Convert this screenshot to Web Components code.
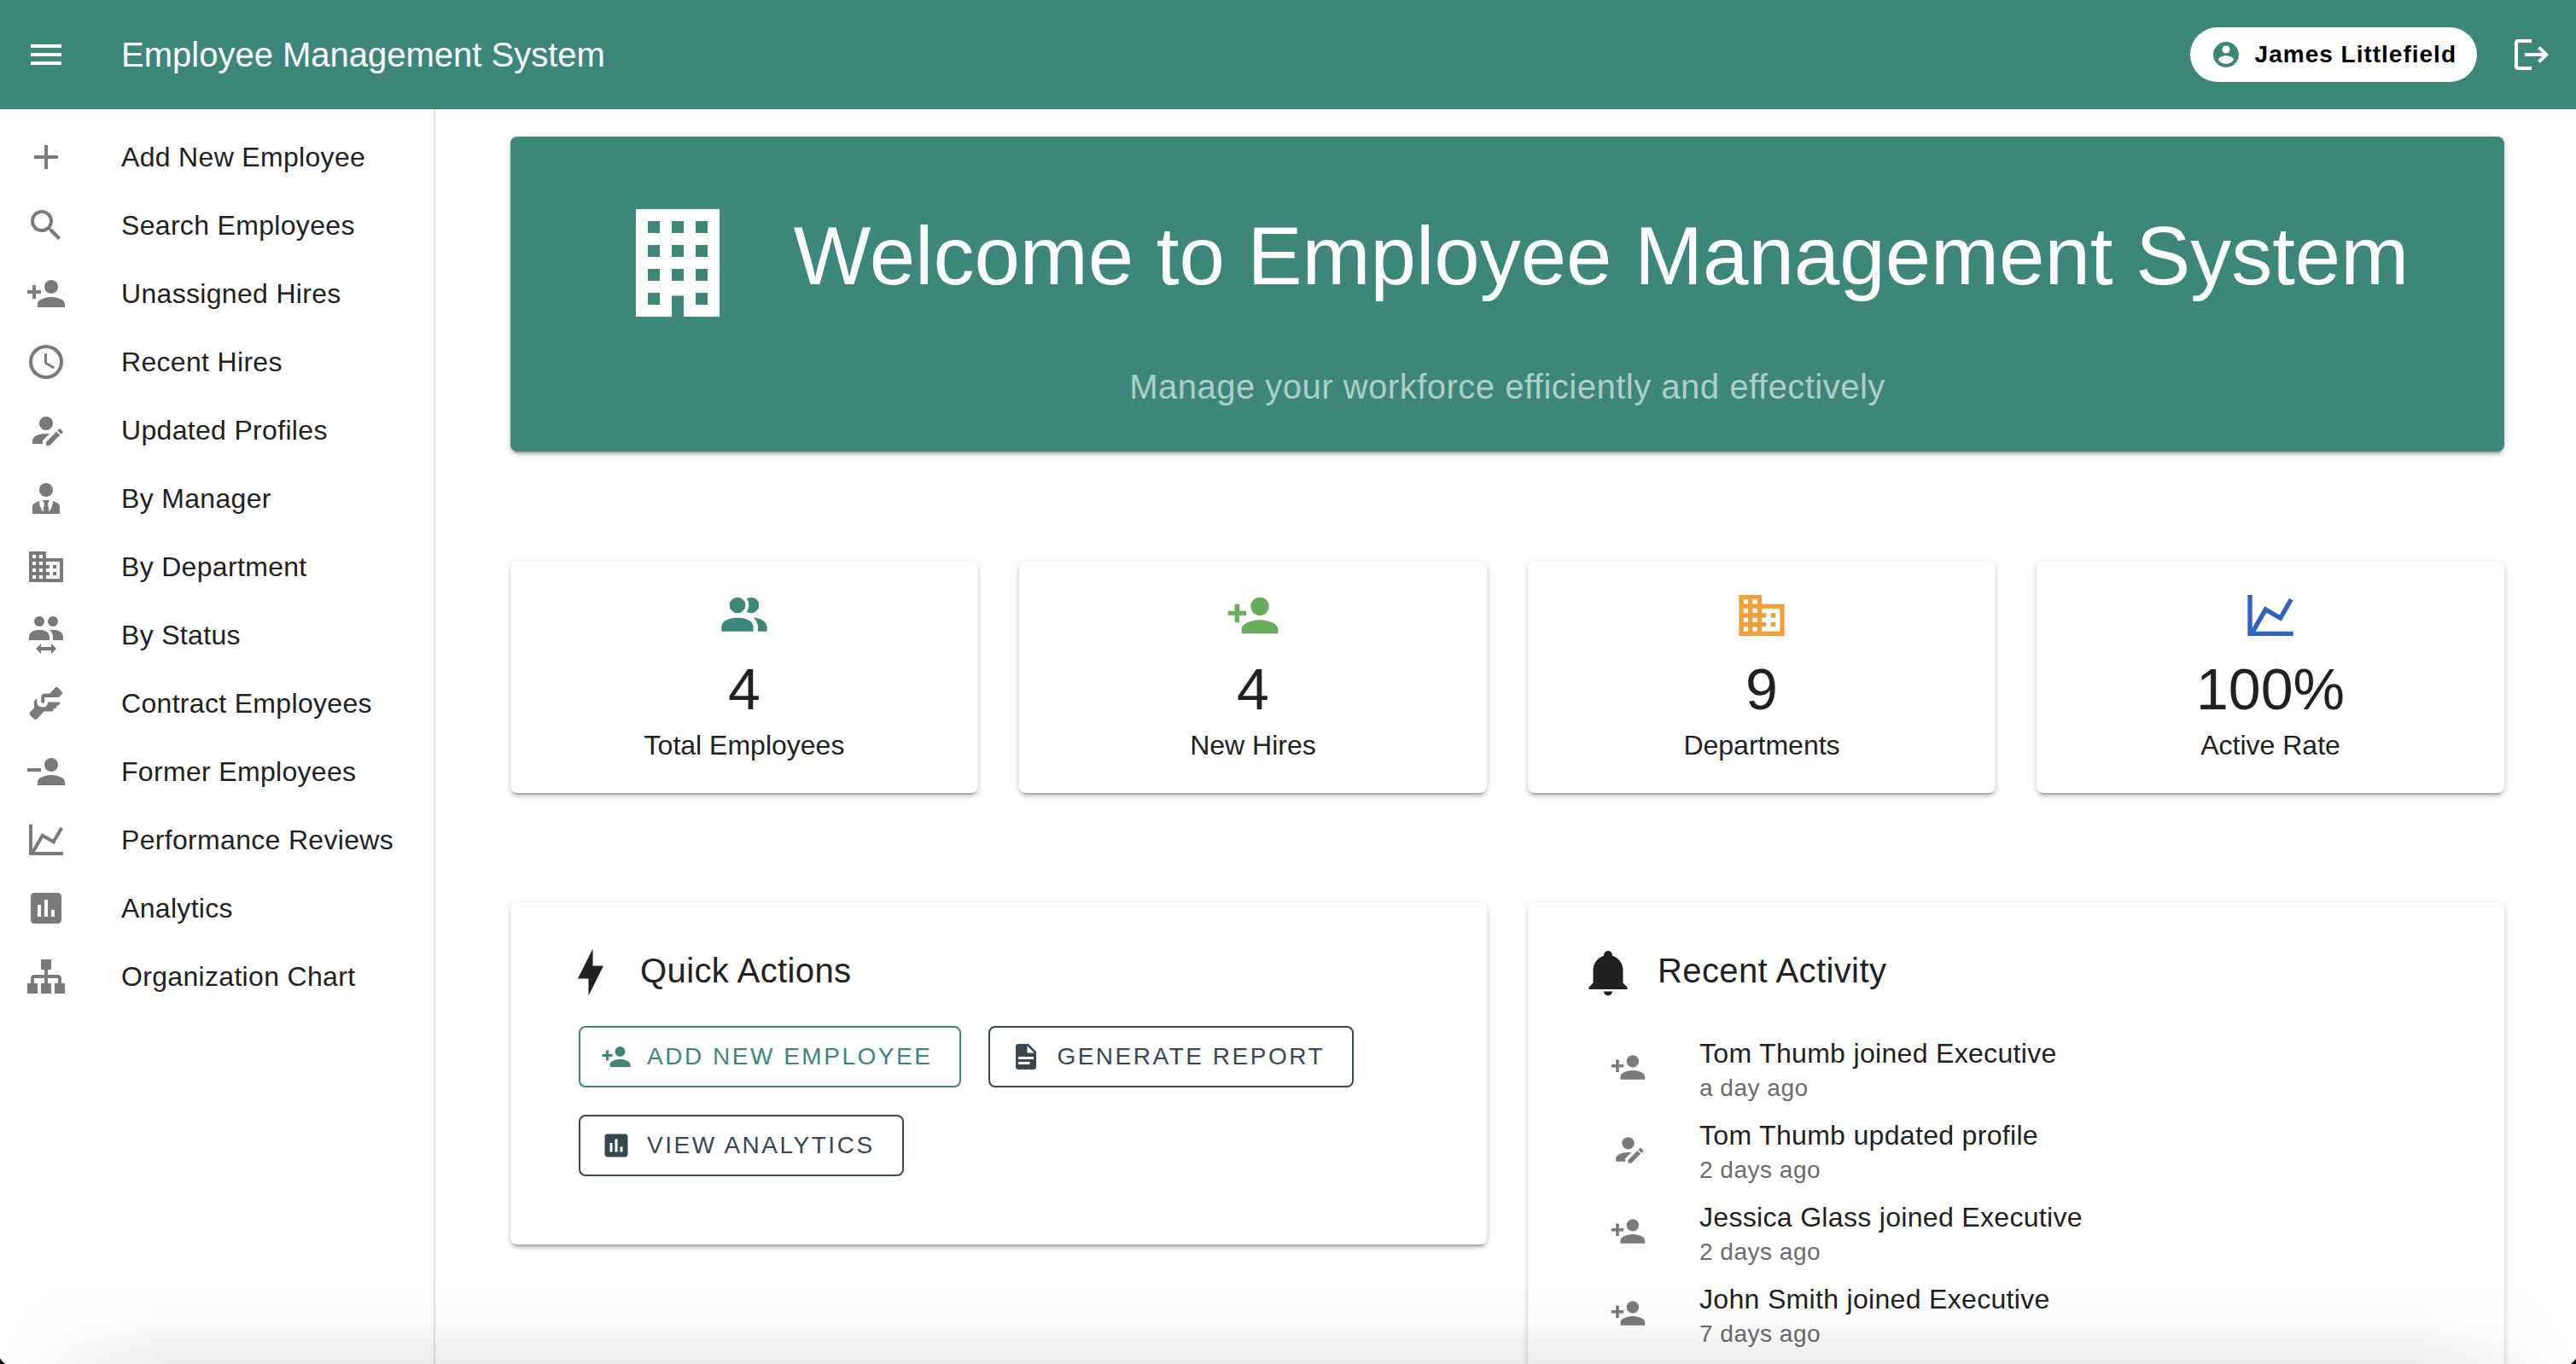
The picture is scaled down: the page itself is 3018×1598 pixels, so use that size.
<!DOCTYPE html>
<html lang="en">
<head>
<meta charset="utf-8">
<title>Employee Management System</title>
<style>
  :root {
    --primary: #3c877a;
    --ink: #212121;
    --muted: #7a7a7a;
    --secondary: #37474f;
    --elevation: 0 6px 2px -4px rgba(0,0,0,.2), 0 4px 4px 0 rgba(0,0,0,.14), 0 2px 10px 0 rgba(0,0,0,.12);
  }
  html, body { height: 100%; }
  body {
    margin: 0;
    overflow: hidden;
    background: #fff;
    color: var(--ink);
    font-family: "Liberation Sans", Arial, sans-serif;
    font-size: 32px;
    line-height: 48px;
  }
</style>
</head>
<body>
<ems-app></ems-app>
<script>
const ICONS = {
  menu: 'M3,6H21V8H3V6M3,11H21V13H3V11M3,16H21V18H3V16Z',
  plus: 'M19,13H13V19H11V13H5V11H11V5H13V11H19V13Z',
  magnify: 'M9.5,3A6.5,6.5 0 0,1 16,9.5C16,11.11 15.41,12.59 14.44,13.73L14.71,14H15.5L20.5,19L19,20.5L14,15.5V14.71L13.73,14.44C12.59,15.41 11.11,16 9.5,16A6.5,6.5 0 0,1 3,9.5A6.5,6.5 0 0,1 9.5,3M9.5,5C7,5 5,7 5,9.5C5,12 7,14 9.5,14C12,14 14,12 14,9.5C14,7 12,5 9.5,5Z',
  'account-plus': 'M15,14C12.33,14 7,15.33 7,18V20H23V18C23,15.33 17.67,14 15,14M6,10V7H4V10H1V12H4V15H6V12H9V10M15,12A4,4 0 0,0 19,8A4,4 0 0,0 15,4A4,4 0 0,0 11,8A4,4 0 0,0 15,12Z',
  'account-minus': 'M15,14C12.33,14 7,15.33 7,18V20H23V18C23,15.33 17.67,14 15,14M1,10V12H9V10M15,12A4,4 0 0,0 19,8A4,4 0 0,0 15,4A4,4 0 0,0 11,8A4,4 0 0,0 15,12Z',
  clock: 'M12,20A8,8 0 0,0 20,12A8,8 0 0,0 12,4A8,8 0 0,0 4,12A8,8 0 0,0 12,20M12,2A10,10 0 0,1 22,12A10,10 0 0,1 12,22C6.47,22 2,17.5 2,12A10,10 0 0,1 12,2M12.5,7V12.25L17,14.92L16.25,16.15L11,13V7H12.5Z',
  'account-edit': 'M21.7,13.35L20.7,14.35L18.65,12.3L19.65,11.3C19.86,11.09 20.21,11.09 20.42,11.3L21.7,12.58C21.91,12.79 21.91,13.14 21.7,13.35M12,18.94L18.06,12.88L20.11,14.93L14.06,21H12V18.94M12,14C7.58,14 4,15.79 4,18V20H10V18.11L14,14.11C13.34,14.03 12.67,14 12,14M12,4A4,4 0 0,0 8,8A4,4 0 0,0 12,12A4,4 0 0,0 16,8A4,4 0 0,0 12,4Z',
  'account-tie': 'M12 3C14.21 3 16 4.79 16 7S14.21 11 12 11 8 9.21 8 7 9.79 3 12 3M16 13.54C16 14.6 15.72 17.07 13.81 19.83L13 15L13.94 13.12C13.32 13.05 12.67 13 12 13S10.68 13.05 10.06 13.12L11 15L10.19 19.83C8.28 17.07 8 14.6 8 13.54C5.61 14.24 4 15.5 4 17V21H20V17C20 15.5 18.4 14.24 16 13.54Z',
  domain: 'M18,15H16V17H18M18,11H16V13H18M20,19H12V17H14V15H12V13H14V11H12V9H20M10,7H8V5H10M10,11H8V9H10M10,15H8V13H10M10,19H8V17H10M6,7H4V5H6M6,11H4V9H6M6,15H4V13H6M6,19H4V17H6M12,7V3H2V21H22V7H12Z',
  'account-switch': 'M16,9C22,9 22,13 22,13V15H16V13C16,13 16,10.69 14.05,9.11C14.6,9.04 15.3,9 16,9M8,9C14,9 14,13 14,13V15H2V13C2,13 2,9 8,9M9,17V19H15V17L18,20L15,23V21H9V23L6,20L9,17M8,1A3,3 0 0,1 11,4A3,3 0 0,1 8,7A3,3 0 0,1 5,4A3,3 0 0,1 8,1M16,1A3,3 0 0,1 19,4A3,3 0 0,1 16,7A3,3 0 0,1 13,4A3,3 0 0,1 16,1Z',
  handshake: 'M17.4,2.7Q18.1,2 18.8,2.7L21.2,5.1Q21.9,5.9 21.2,6.6L19.4,8.5H11.1V11A1,1 0 0,1 9.1,11V8.5Q9.1,6.2 11.2,6.2H14.2L17.4,2.7M6.7,9V11.6Q7,14.2 10,14.2Q13,14.2 13,11.2H20V12.2Q20,13.2 18.9,13.2H18.3V14Q18.3,15 17.2,15H16.4V15.7Q16.4,16.8 15.2,16.8H10.8L6.6,21.1Q5.7,22 4.9,21.1L2.5,18.8Q2,18 2.6,17.3L5,14.8V10.8L6.7,9Z',
  'chart-line': 'M16,11.78L20.24,4.45L21.97,5.45L16.74,14.5L10.23,10.75L5.46,19H22V21H2V3H4V17.54L9.5,8L16,11.78Z',
  'chart-box': 'M9 17H7V10H9V17M13 17H11V7H13V17M17 17H15V13H17V17M19 3H5C3.9 3 3 3.9 3 5V19C3 20.1 3.9 21 5 21H19C20.1 21 21 20.1 21 19V5C21 3.9 20.1 3 19 3Z',
  sitemap: 'M9,2V8H11V11H5C3.89,11 3,11.89 3,13V16H1V22H7V16H5V13H11V16H9V22H15V16H13V13H19V16H17V22H23V16H21V13C21,11.89 20.11,11 19,11H13V8H15V2H9Z',
  'account-circle': 'M12,19.2C9.5,19.2 7.29,17.92 6,16C6.03,14 10,12.9 12,12.9C14,12.9 17.97,14 18,16C16.71,17.92 14.5,19.2 12,19.2M12,5A3,3 0 0,1 15,8A3,3 0 0,1 12,11A3,3 0 0,1 9,8A3,3 0 0,1 12,5M12,2A10,10 0 0,0 2,12A10,10 0 0,0 12,22A10,10 0 0,0 22,12C22,6.47 17.5,2 12,2Z',
  logout: 'M17 7L15.59 8.41L18.17 11H8V13H18.17L15.59 15.58L17 17L22 12M4 5H12V3H4C2.9 3 2 3.9 2 5V19C2 20.1 2.9 21 4 21H12V19H4V5Z',
  office: 'M5,3V21H11V17.5H13V21H19V3H5M7,5H9V7H7V5M11,5H13V7H11V5M15,5H17V7H15V5M7,9H9V11H7V9M11,9H13V11H11V9M15,9H17V11H15V9M7,13H9V15H7V13M11,13H13V15H11V13M15,13H17V15H15V13M7,17H9V19H7V17M15,17H17V19H15V17Z',
  people: 'M16 17V19H2V17S2 13 9 13 16 17 16 17M12.5 7.5A3.5 3.5 0 1 0 9 11A3.5 3.5 0 0 0 12.5 7.5M15.94 13A5.32 5.32 0 0 1 18 17V19H22V17S22 13.37 15.94 13M15 4A3.39 3.39 0 0 0 13.07 4.59A5 5 0 0 1 13.07 10.41A3.39 3.39 0 0 0 15 11A3.5 3.5 0 0 0 15 4Z',
  bolt: 'M11 15H6L13 1V9H18L11 23V15Z',
  bell: 'M21,19V20H3V19L5,17V11C5,7.9 7.03,5.17 10,4.29C10,4.19 10,4.1 10,4A2,2 0 0,1 12,2A2,2 0 0,1 14,4C14,4.1 14,4.19 14,4.29C16.97,5.17 19,7.9 19,11V17L21,19M14,21A2,2 0 0,1 12,23A2,2 0 0,1 10,21',
  file: 'M13,9H18.5L13,3.5V9M6,2H14L20,8V20A2,2 0 0,1 18,22H6C4.89,22 4,21.1 4,20V4C4,2.89 4.89,2 6,2M15,18V16H6V18H15M18,14V12H6V14H18Z'
};

const define = (name, render) => customElements.define(name, class extends HTMLElement {
  connectedCallback() {
    if (!this.shadowRoot) this.attachShadow({ mode: 'open' }).innerHTML = render(this);
  }
});

define('ems-icon', el => `
  <style>
    :host { display: block; flex: none; width: var(--icon-size, 48px); height: var(--icon-size, 48px); }
    svg { display: block; width: 100%; height: 100%; fill: currentColor; }
  </style>
  <svg viewBox="0 0 24 24" aria-hidden="true"><path fill-rule="${el.getAttribute('rule') || 'nonzero'}" d="${ICONS[el.getAttribute('name')]}"/></svg>`);

define('ems-app-bar', () => `
  <style>
    :host { display: flex; align-items: center; box-sizing: border-box; height: 128px; padding: 0 28px 0 30px; background: var(--primary); color: #fff; }
    button { display: flex; align-items: center; margin: 0; padding: 0; border: 0; background: none; color: inherit; font: inherit; cursor: pointer; }
    h1 { flex: 1; margin: 0 0 0 64px; font-size: 40px; line-height: 60px; font-weight: 400; }
    .user { gap: 16px; height: 64px; margin-right: 40px; padding: 0 24px; border-radius: 32px; background: #fff; color: #000; font-size: 28px; font-weight: 700; letter-spacing: 1px; }
    .user ems-icon { --icon-size: 36px; color: var(--primary); }
  </style>
  <button aria-label="Toggle menu"><ems-icon name="menu"></ems-icon></button>
  <h1>Employee Management System</h1>
  <button class="user"><ems-icon name="account-circle"></ems-icon><span>James Littlefield</span></button>
  <button aria-label="Log out"><ems-icon name="logout"></ems-icon></button>`);

define('ems-nav-item', el => `
  <style>
    :host { display: block; }
    a { display: flex; align-items: center; gap: 64px; height: 80px; padding: 0 30px; color: var(--ink); text-decoration: none; letter-spacing: .01em; white-space: nowrap; }
    ems-icon { color: var(--muted); }
  </style>
  <a href="#"><ems-icon name="${el.getAttribute('icon')}"></ems-icon><slot></slot></a>`);

define('ems-drawer', () => `
  <style>
    :host { display: block; flex: none; box-sizing: border-box; width: 510px; padding: 16px 0; border-right: 2px solid #e0e0e0; }
  </style>
  <nav aria-label="Main">
    <ems-nav-item icon="plus">Add New Employee</ems-nav-item>
    <ems-nav-item icon="magnify">Search Employees</ems-nav-item>
    <ems-nav-item icon="account-plus">Unassigned Hires</ems-nav-item>
    <ems-nav-item icon="clock">Recent Hires</ems-nav-item>
    <ems-nav-item icon="account-edit">Updated Profiles</ems-nav-item>
    <ems-nav-item icon="account-tie">By Manager</ems-nav-item>
    <ems-nav-item icon="domain">By Department</ems-nav-item>
    <ems-nav-item icon="account-switch">By Status</ems-nav-item>
    <ems-nav-item icon="handshake">Contract Employees</ems-nav-item>
    <ems-nav-item icon="account-minus">Former Employees</ems-nav-item>
    <ems-nav-item icon="chart-line">Performance Reviews</ems-nav-item>
    <ems-nav-item icon="chart-box">Analytics</ems-nav-item>
    <ems-nav-item icon="sitemap">Organization Chart</ems-nav-item>
  </nav>`);

define('ems-banner', () => `
  <style>
    :host { display: block; padding: 64px 48px 44px; border-radius: 8px; background: var(--primary); box-shadow: var(--elevation); color: #fff; text-align: center; }
    .title { display: flex; justify-content: center; gap: 52px; }
    ems-icon { --icon-size: 168px; }
    h2 { margin: 0; font-size: 96px; line-height: 152px; font-weight: 400; }
    p { margin: 29px 0 0; color: rgba(255,255,255,.6); font-size: 40px; line-height: 64px; letter-spacing: .0125em; }
  </style>
  <div class="title"><ems-icon name="office" rule="evenodd"></ems-icon><h2>Welcome to Employee Management System</h2></div>
  <p>Manage your workforce efficiently and effectively</p>`);

define('ems-stat', el => `
  <style>
    :host { display: flex; flex-direction: column; align-items: center; padding: 32px; border-radius: 8px; background: #fff; box-shadow: var(--elevation); }
    ems-icon { --icon-size: 64px; margin-bottom: 14px; color: ${el.getAttribute('color')}; }
    strong { margin-bottom: 2px; font-size: 68px; line-height: 80px; font-weight: 400; }
  </style>
  <ems-icon name="${el.getAttribute('icon')}"></ems-icon>
  <strong>${el.getAttribute('value')}</strong>
  <span><slot></slot></span>`);

define('ems-panel', el => `
  <style>
    :host { display: block; padding: 52px 64px 80px; border-radius: 8px; background: #fff; box-shadow: var(--elevation); }
    header { display: flex; gap: 28px; margin-bottom: 33px; }
    ems-icon { --icon-size: 60px; }
    h3 { margin: 0; font-size: 40px; line-height: 56px; font-weight: 400; letter-spacing: .01em; }
  </style>
  <header><ems-icon name="${el.getAttribute('icon')}"></ems-icon><h3>${el.getAttribute('heading')}</h3></header>
  <slot></slot>`);

define('ems-action', el => `
  <style>
    :host { display: block; color: var(--secondary); }
    :host([primary]) { color: var(--primary); }
    button { display: flex; align-items: center; gap: 18px; box-sizing: border-box; height: 72px; margin: 0; padding: 0 32px 0 24px; border: 2px solid currentColor; border-radius: 8px; background: none; color: inherit; font: inherit; font-size: 28px; letter-spacing: .09em; text-transform: uppercase; white-space: nowrap; cursor: pointer; }
    ems-icon { --icon-size: 36px; }
  </style>
  <button><ems-icon name="${el.getAttribute('icon')}"></ems-icon><span><slot></slot></span></button>`);

define('ems-actions', () => `
  <style>:host { display: flex; flex-wrap: wrap; gap: 32px; padding: 0 16px; }</style>
  <slot></slot>`);

define('ems-activity', el => `
  <style>
    :host { display: flex; align-items: center; gap: 62px; height: 96px; padding: 0 32px; }
    ems-icon { --icon-size: 43px; color: var(--muted); }
    p { margin: 0; letter-spacing: .01em; }
    time { display: block; color: #6b6b6b; font-size: 28px; line-height: 33px; letter-spacing: .018em; }
  </style>
  <ems-icon name="${el.getAttribute('icon')}"></ems-icon>
  <div><p><slot></slot></p><time>${el.getAttribute('when')}</time></div>`);

define('ems-dashboard', () => `
  <style>
    :host { display: flex; flex: 1; flex-direction: column; gap: 128px; min-width: 0; padding: 32px 84px 0 88px; }
    .stats { display: grid; grid-template-columns: repeat(4, 1fr); gap: 48px; }
    .panels { display: grid; grid-template-columns: repeat(2, 1fr); align-items: start; gap: 48px; }
  </style>
  <ems-banner></ems-banner>
  <div class="stats">
    <ems-stat icon="people" color="var(--primary)" value="4">Total Employees</ems-stat>
    <ems-stat icon="account-plus" color="#68ad5b" value="4">New Hires</ems-stat>
    <ems-stat icon="domain" color="#f29f38" value="9">Departments</ems-stat>
    <ems-stat icon="chart-line" color="#2e64bf" value="100%">Active Rate</ems-stat>
  </div>
  <div class="panels">
    <ems-panel icon="bolt" heading="Quick Actions">
      <ems-actions>
        <ems-action icon="account-plus" primary>Add New Employee</ems-action>
        <ems-action icon="file">Generate Report</ems-action>
        <ems-action icon="chart-box">View Analytics</ems-action>
      </ems-actions>
    </ems-panel>
    <ems-panel icon="bell" heading="Recent Activity">
      <ems-activity icon="account-plus" when="a day ago">Tom Thumb joined Executive</ems-activity>
      <ems-activity icon="account-edit" when="2 days ago">Tom Thumb updated profile</ems-activity>
      <ems-activity icon="account-plus" when="2 days ago">Jessica Glass joined Executive</ems-activity>
      <ems-activity icon="account-plus" when="7 days ago">John Smith joined Executive</ems-activity>
    </ems-panel>
  </div>`);

define('ems-app', () => `
  <style>
    :host { display: flex; flex-direction: column; height: 100vh; overflow: hidden; }
    .body { display: flex; flex: 1; min-height: 0; }
    .fade, .corner { position: fixed; bottom: 0; pointer-events: none; }
    .fade { left: 0; right: 0; height: 100px; background: linear-gradient(to bottom, rgba(0,0,0,0), rgba(0,0,0,.02) 50%, rgba(0,0,0,.08)); -webkit-mask: linear-gradient(to right, transparent, #000 200px, #000 calc(100% - 200px), transparent); mask: linear-gradient(to right, transparent, #000 200px, #000 calc(100% - 200px), transparent); }
    .corner { width: 16px; height: 16px; }
    .left { left: 0; background: radial-gradient(circle at 100% 0, transparent 18px, #000 19px); }
    .right { right: 0; background: radial-gradient(circle at 0 0, transparent 18px, #000 19px); }
  </style>
  <ems-app-bar></ems-app-bar>
  <div class="body"><ems-drawer></ems-drawer><ems-dashboard></ems-dashboard></div>
  <div class="fade"></div>
  <div class="corner left"></div>
  <div class="corner right"></div>`);
</script>
</body>
</html>
